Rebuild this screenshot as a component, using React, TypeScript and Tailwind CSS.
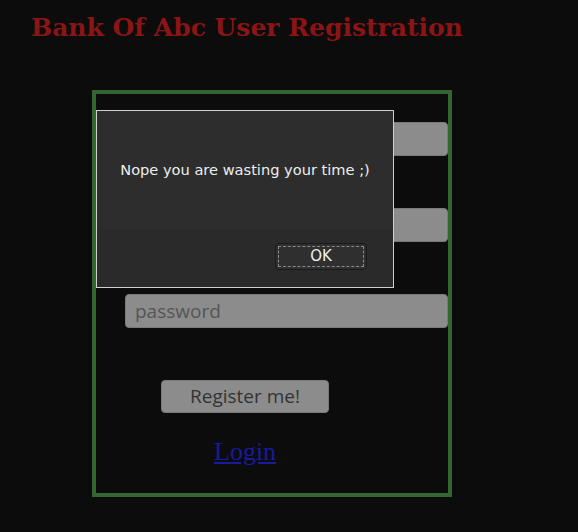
export default function App() {
  return (
    <div className="relative min-h-[532px] w-full bg-[#0c0c0c] [font-family:'DejaVu_Serif',serif]">
      <h1 className="pl-[31px] pt-[12px] text-[25px] font-bold leading-[32px] text-[#8b1414] [font-family:'DejaVu_Serif',serif]">
        Bank Of Abc User Registration
      </h1>

      <form className="ml-[92px] mt-[46px] flex h-[407px] w-[360px] flex-col border-4 border-[#336633] pl-[29px] pt-[28px]">
        <input
          type="text"
          className="h-[34px] w-[323px] rounded-[4px] border border-[#7a7a7a] bg-[#8c8c8c] px-[9px] text-[19px] text-[#555] outline-none [font-family:'Open_Sans',sans-serif]"
        />
        <input
          type="email"
          className="mt-[52px] h-[34px] w-[323px] rounded-[4px] border border-[#7a7a7a] bg-[#8c8c8c] px-[9px] text-[19px] text-[#555] outline-none [font-family:'Open_Sans',sans-serif]"
        />
        <input
          type="password"
          placeholder="password"
          className="mt-[52px] h-[34px] w-[323px] rounded-[4px] border border-[#7a7a7a] bg-[#8c8c8c] px-[9px] text-[19px] text-[#555] outline-none placeholder:text-[#555] [font-family:'Open_Sans',sans-serif]"
        />
        <button
          type="button"
          className="ml-[36px] mt-[52px] h-[33px] w-[168px] rounded-[4px] border border-[#7a7a7a] bg-[#8c8c8c] text-[19px] leading-none text-[#333] [font-family:'Open_Sans',sans-serif]"
        >
          Register me!
        </button>
        <a
          href="#"
          className="ml-[89px] mt-[24px] w-fit text-[26px] leading-[30px] text-[#1a1a9e] underline [font-family:'Liberation_Serif',serif]"
        >
          Login
        </a>
      </form>

      <div className="absolute left-[96px] top-[110px] flex h-[178px] w-[298px] flex-col border border-[#d0d0d0] bg-[#2d2d2d] [font-family:'DejaVu_Sans',sans-serif]">
        <div className="flex flex-1 items-start justify-center pt-[50px]">
          <p className="text-[14.6px] leading-[18px] text-[#eeeeee]">Nope you are wasting your time ;)</p>
        </div>
        <div className="flex h-[58px] items-start justify-end bg-[#2a2a2a] pr-[26px] pt-[14px]">
          <button
            type="button"
            className="flex h-[27px] w-[92px] items-center justify-center rounded-[4px] border border-[#1a1a1a] bg-[#2f2f2f] p-[2px]"
          >
            <span className="flex h-full w-full items-center justify-center border border-dashed border-[#8a8a8a] text-[15px] text-[#eeeeee]">
              OK
            </span>
          </button>
        </div>
      </div>
    </div>
  );
}
